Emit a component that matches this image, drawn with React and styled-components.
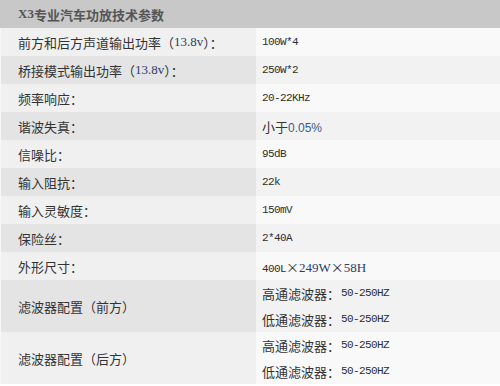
import React from "react";
import styled, { createGlobalStyle } from "styled-components";

const Global = createGlobalStyle`
  html, body { margin: 0; padding: 0; background: #ffffff; }
  body { font-family: "Noto Sans CJK SC", "Noto Sans", sans-serif; }
`;

const Table = styled.div`
  width: 500px;
  display: flex;
  flex-direction: column;
`;

const Header = styled.div`
  height: 28px;
  background: #c8c8c8;
  display: flex;
  align-items: center;
  padding-left: 18px;
  font-size: 13px;
  font-weight: bold;
  color: #555555;
`;

const HeadLatin = styled.span`
  font-family: "Liberation Serif", serif;
  font-weight: bold;
  font-size: 13px;
`;

const Row = styled.div`
  display: grid;
  grid-template-columns: 256px 1fr;
  min-height: 28px;
`;

const Label = styled.div`
  background: ${(p) => (p.$alt ? "#e4e4e4" : "#f0f0f0")};
  border-left: 1px solid #f7f7f7;
  padding-left: 17px;
  display: flex;
  align-items: center;
  font-size: 13px;
  color: #333333;
`;

const Value = styled.div`
  background: ${(p) => (p.$alt ? "#f2f2f2" : "#f9f9f9")};
  padding-left: 6px;
  display: flex;
  flex-direction: column;
  justify-content: center;
  font-size: 13px;
  color: #333333;
`;

const Line = styled.div`
  height: ${(p) => (p.$tall ? "26px" : "28px")};
  display: flex;
  align-items: center;
  white-space: pre;
`;

const Mono = styled.span`
  font-family: "Liberation Mono", monospace;
  font-size: 11px;
  letter-spacing: -0.6px;
  color: #2e2e2e;
`;

const Serif = styled.span`
  font-family: "Liberation Serif", serif;
  font-size: 13px;
  color: ${(p) => p.$color || "#2b3c68"};
`;

const Sans = styled.span`
  font-family: "Liberation Sans", sans-serif;
  font-size: 12px;
  color: #3b5a8c;
`;

const Gap = styled.span`
  display: inline-block;
  width: ${(p) => p.$w}px;
`;

const rows = [
  {
    label: (
      <>
        前方和后方声道输出功率（<Serif>13.8v</Serif>）：
      </>
    ),
    value: <Mono>100W*4</Mono>,
  },
  {
    label: (
      <>
        桥接模式输出功率（<Serif>13.8v</Serif>）：
      </>
    ),
    value: <Mono>250W*2</Mono>,
  },
  { label: "频率响应：", value: <Mono>20-22KHz</Mono> },
  {
    label: "谐波失真：",
    value: (
      <span>
        小于<Sans>0.05%</Sans>
      </span>
    ),
  },
  { label: "信噪比：", value: <Mono>95dB</Mono> },
  { label: "输入阻抗：", value: <Mono>22k</Mono> },
  { label: "输入灵敏度：", value: <Mono>150mV</Mono> },
  { label: "保险丝：", value: <Mono>2*40A</Mono> },
  {
    label: "外形尺寸：",
    value: (
      <span>
        <Mono>400L</Mono>×<Serif>249W</Serif>×<Serif>58H</Serif>
      </span>
    ),
  },
];

const filterLines = [
  ["高通滤波器：", "50-250HZ"],
  ["低通滤波器：", "50-250HZ"],
];

const filterRows = ["滤波器配置（前方）", "滤波器配置（后方）"];

export default function App() {
  return (
    <>
      <Global />
      <Table>
        <Header>
          <HeadLatin>X3</HeadLatin>专业汽车功放技术参数
        </Header>
        {rows.map((r, i) => (
          <Row key={i}>
            <Label $alt={i % 2 === 1}>{r.label}</Label>
            <Value $alt={i % 2 === 1}>
              <Line>{r.value}</Line>
            </Value>
          </Row>
        ))}
        {filterRows.map((f, i) => {
          const alt = (rows.length + i) % 2 === 1;
          return (
            <Row key={f}>
              <Label $alt={alt}>{f}</Label>
              <Value $alt={alt}>
                {filterLines.map(([a, b]) => (
                  <Line key={a} $tall>
                    {a}
                    <Gap $w={1} />
                    <Mono>{b}</Mono>
                  </Line>
                ))}
              </Value>
            </Row>
          );
        })}
      </Table>
    </>
  );
}
